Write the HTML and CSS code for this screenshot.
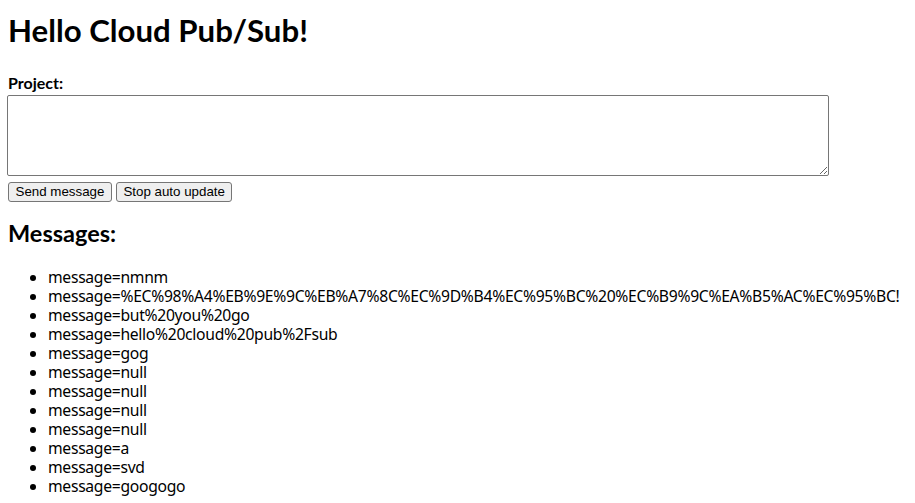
FILE: index.html
```html
<!DOCTYPE html>
<html lang="ko">
<head>
<meta charset="utf-8">
<title>Hello Cloud Pub/Sub!</title>
<link rel="stylesheet" href="styles.css">
</head>
<body>
<h1 class="title">Hello Cloud Pub/Sub!</h1>
<form class="form">
  <label class="label" for="project">Project:</label>
  <textarea class="input" id="project"></textarea>
  <div class="actions">
    <button type="button" class="btn">Send message</button>
    <button type="button" class="btn">Stop auto update</button>
  </div>
</form>
<h2 class="subtitle">Messages:</h2>
<ul class="messages">
  <li>message=nmnm</li>
  <li>message=%EC%98%A4%EB%9E%9C%EB%A7%8C%EC%9D%B4%EC%95%BC%20%EC%B9%9C%EA%B5%AC%EC%95%BC!</li>
  <li>message=but%20you%20go</li>
  <li>message=hello%20cloud%20pub%2Fsub</li>
  <li>message=gog</li>
  <li>message=null</li>
  <li>message=null</li>
  <li>message=null</li>
  <li>message=null</li>
  <li>message=a</li>
  <li>message=svd</li>
  <li>message=googogo</li>
</ul>
</body>
</html>
```
FILE: styles.css
```css
html, body {
  margin: 0;
  padding: 0;
  background: #fff;
  color: #000;
}
body {
  padding: 8px;
  font-family: "Noto Sans", "Noto Sans CJK KR", sans-serif;
  font-size: 16px;
  white-space: nowrap;
}
.title {
  margin: 2px 0 0;
  font-family: Lato, "Noto Sans", sans-serif;
  font-size: 31.2px;
  line-height: 40px;
  font-weight: 700;
}
.form {
  margin: 23px 0 0;
}
.label {
  display: block;
  font-family: Lato, "Noto Sans", sans-serif;
  font-weight: 700;
  line-height: 19px;
}
.input {
  display: block;
  box-sizing: border-box;
  width: 822px;
  height: 81px;
  margin: 3px 0 0 -1px;
  border: 1px solid #767676;
  border-radius: 2px;
  padding: 2px;
  font-family: "Liberation Mono", monospace;
  font-size: 13px;
}
.actions {
  display: flex;
  gap: 4px;
  margin-top: 6px;
}
.btn {
  box-sizing: border-box;
  height: 20px;
  padding: 0 6.5px;
  border: 1px solid #767676;
  border-radius: 3px;
  background: #efefef;
  color: #000;
  font-family: "Liberation Sans", Arial, sans-serif;
  font-size: 13.33px;
  line-height: 18px;
}
.subtitle {
  margin: 16px 0 0;
  font-family: Lato, "Noto Sans", sans-serif;
  font-size: 23.5px;
  line-height: 30px;
  font-weight: 700;
}
.messages {
  margin: 20px 0 0;
  padding-left: 40px;
  list-style: disc;
  font-size: 15.7px;
  letter-spacing: -0.3px;
}
.messages li {
  line-height: 19px;
}
```
